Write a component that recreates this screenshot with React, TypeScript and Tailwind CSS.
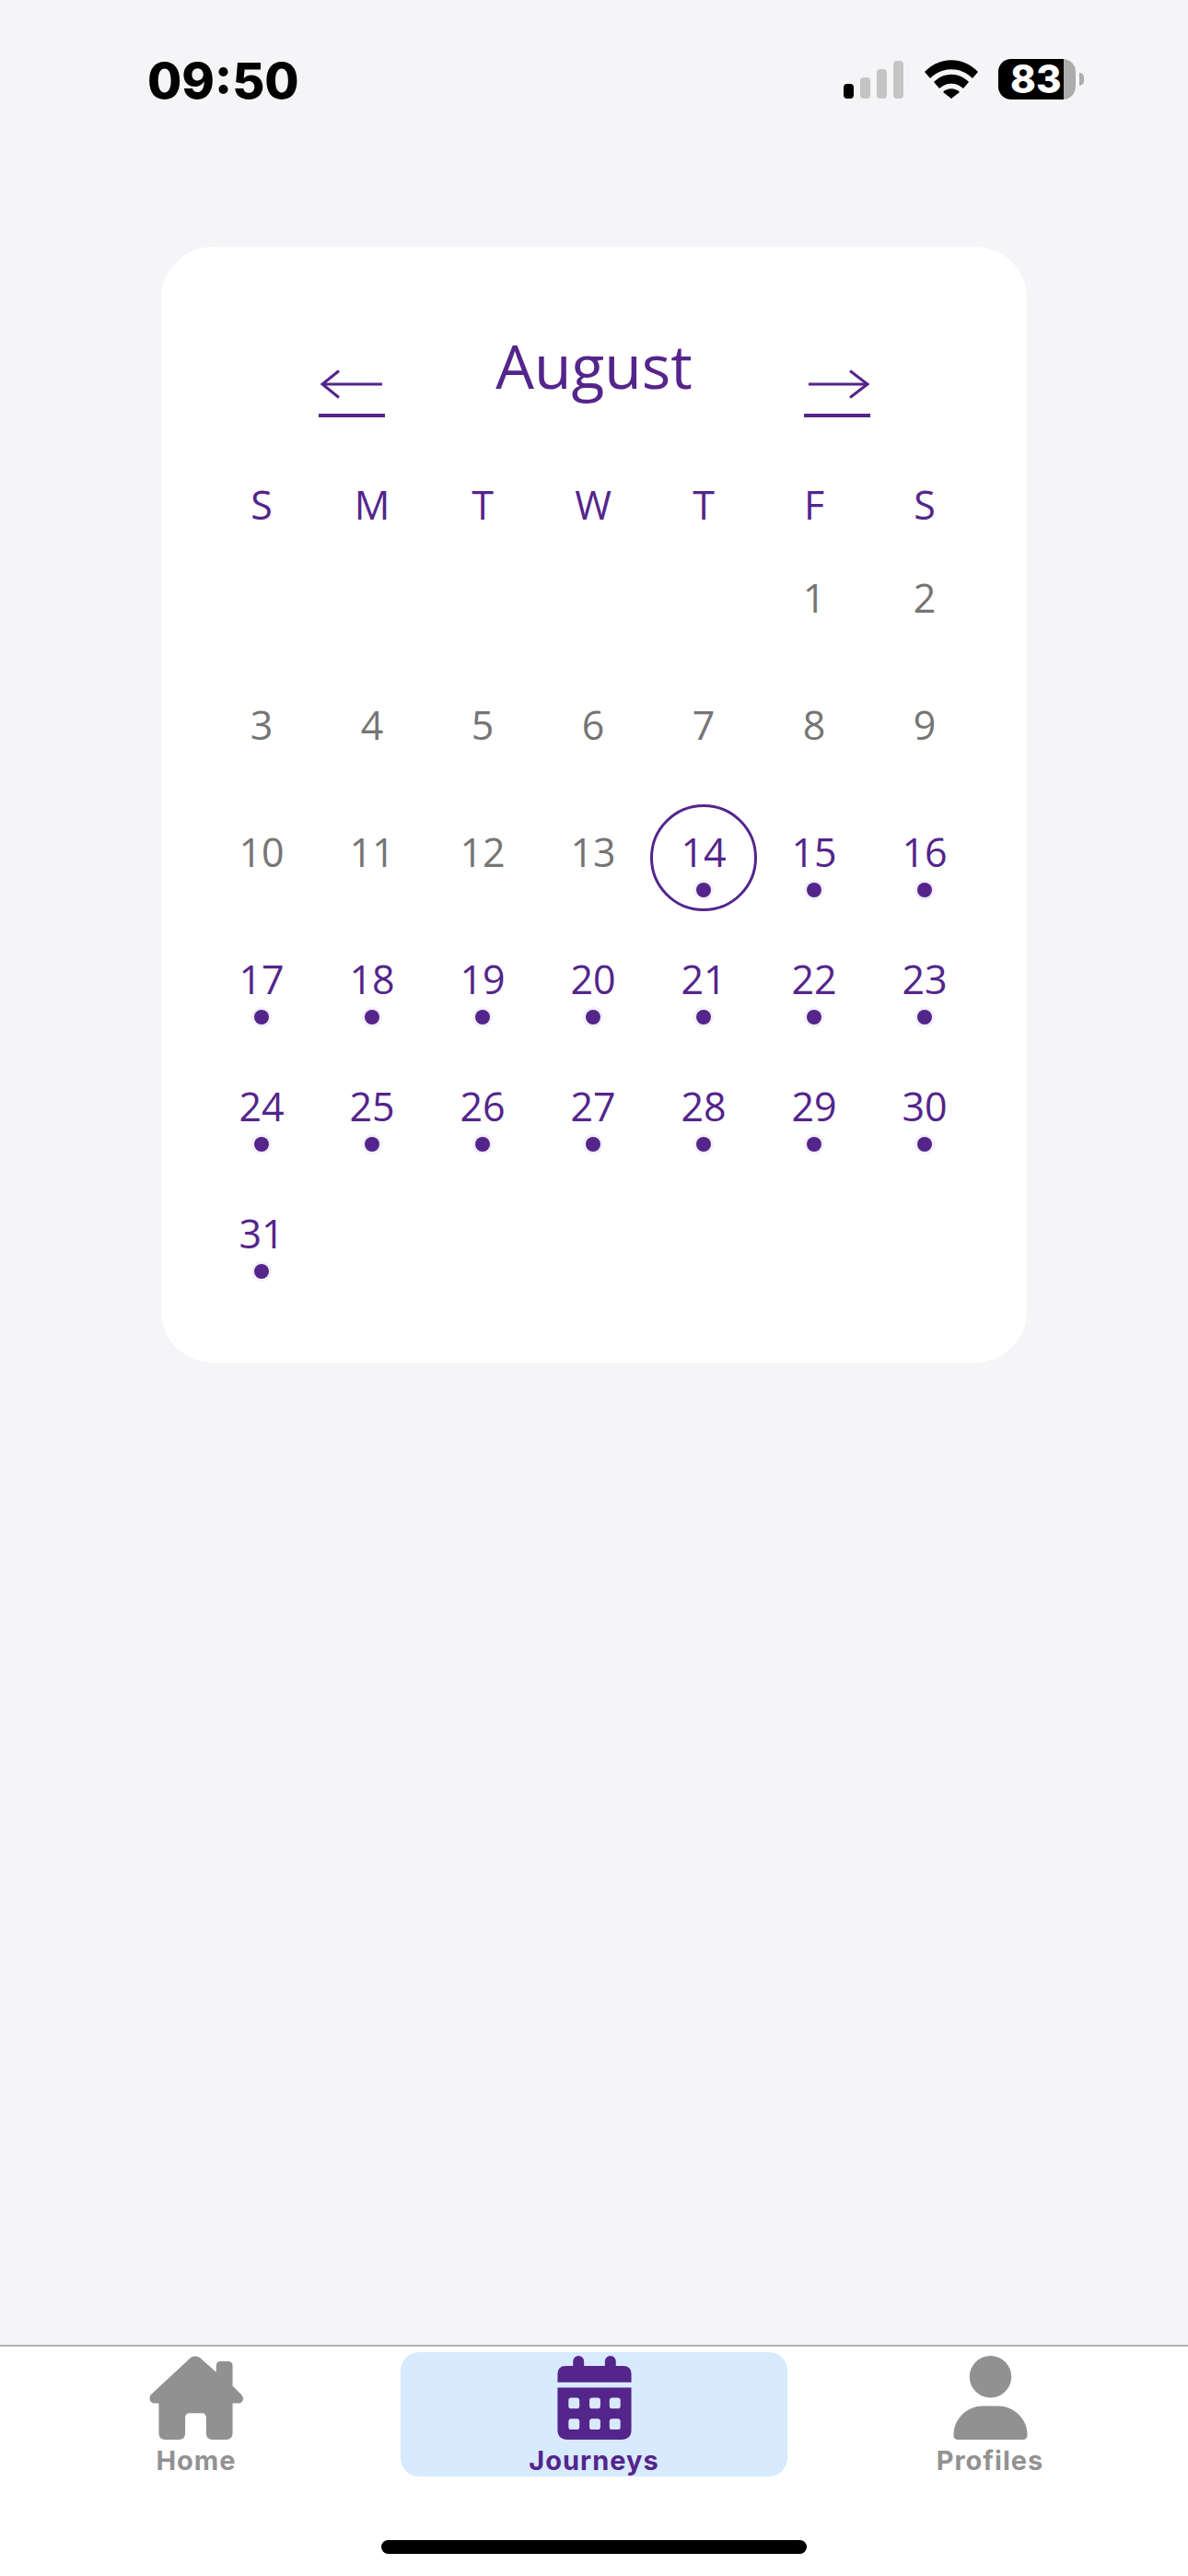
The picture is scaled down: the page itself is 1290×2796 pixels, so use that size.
import React from 'react';

const PURPLE = '#54258b';

const weekdays = ['S', 'M', 'T', 'W', 'T', 'F', 'S'];
const blanks = [0, 1, 2, 3, 4];
const days = Array.from({ length: 31 }, (_, i) => i + 1);

function StatusBar() {
  return (
    <div className="flex items-center justify-between h-[44px] mt-[64px] pl-[160px] pr-[113px]">
      <span className="pt-[3px] font-['Inter',sans-serif] font-extrabold text-[54px] leading-[44px] text-black">09:50</span>
      <div className="flex items-end">
        {/* signal */}
        <div className="flex items-end gap-[7px] mb-[1px]">
          <div className="w-[11px] h-[16px] rounded-[4px] bg-black" />
          <div className="w-[11px] h-[23px] rounded-[4px] bg-[#c4c4c4]" />
          <div className="w-[11px] h-[32px] rounded-[4px] bg-[#c4c4c4]" />
          <div className="w-[11px] h-[41px] rounded-[4px] bg-[#c4c4c4]" />
        </div>
        {/* wifi */}
        <svg width="58" height="42" viewBox="0 0 58 42" className="ml-[23px] mb-[1px]">
          <path d="M0 13C16-4 42-4 58 13L52 20C39 7 19 7 6 20Z" fill="#000" />
          <path d="M10 24C21 13 37 13 48 24L42 31C34 24 24 24 16 31Z" fill="#000" />
          <path d="M20 35C25 30 33 30 38 35L29 42Z" fill="#000" />
        </svg>
        {/* battery */}
        <div className="flex items-center ml-[22px]">
          <div className="flex items-center w-[84px] h-[44px] rounded-[14px] pl-[13px] bg-[linear-gradient(90deg,#000_0,#000_71px,#acacac_71px,#acacac_100%)]">
            <span className="font-['Inter',sans-serif] font-extrabold text-[42px] leading-none text-white">83</span>
          </div>
          <div className="w-[5px] h-[14px] ml-[4px] rounded-r-full bg-[#acacac]" />
        </div>
      </div>
    </div>
  );
}

function Arrow({ dir }: { dir: 'left' | 'right' }) {
  return (
    <div className="w-[72px] h-[54px] border-b-4 border-[#54258b] flex items-start justify-center">
      <svg width="72" height="36" viewBox="0 0 72 36" fill="none" stroke={PURPLE} strokeWidth="3">
        {dir === 'left' ? (
          <>
            <path d="M4 18H69" />
            <path d="M22 3.5L4 18L22 32.5" />
          </>
        ) : (
          <>
            <path d="M5 18H69" />
            <path d="M50 3.5L69 18L50 32.5" />
          </>
        )}
      </svg>
    </div>
  );
}

function Day({ n }: { n: number }) {
  const active = n >= 14;
  const today = n === 14;
  return (
    <div className="h-[138px] flex flex-col items-center pt-[12px]">
      <div
        className={`w-[116px] h-[116px] rounded-full border-[3px] pt-[19px] flex flex-col items-center ${
          today ? 'border-[#54258b]' : 'border-transparent'
        }`}
      >
        <span className={`text-[43px] leading-[60px] ${active ? 'text-[#54258b]' : 'text-[#757575]'}`}>{n}</span>
        {active && <div className="w-[16px] h-[16px] mt-[3px] rounded-full bg-[#54258b] shadow-[0_0_0_3px_#f4f0f9]" />}
      </div>
    </div>
  );
}

function HomeIcon() {
  return (
    <svg width="104" height="92" viewBox="0 0 104 92" fill="#919191">
      <path d="M46 2Q51-1 56 2L74 18V11Q74 6 79 6H87Q92 6 92 11V33L102 43Q106 49 100 52H92V85Q92 92 85 92H70Q63 92 63 85V68Q63 63 58 63H45Q40 63 40 68V85Q40 92 33 92H18Q11 92 11 85V52H5Q-1 50 2 43Z" />
    </svg>
  );
}

function CalendarIcon() {
  return (
    <svg width="81" height="92" viewBox="0 0 81 92" fill={PURPLE}>
      <rect x="17" y="0" width="12" height="20" rx="6" />
      <rect x="52" y="0" width="12" height="20" rx="6" />
      <path d="M0 29V20Q0 11 9 11H72Q81 11 81 20V29Z" />
      <path d="M0 35H81V81Q81 92 70 92H11Q0 92 0 81Z" />
      {[12, 35, 57].map((x) =>
        [46, 69].map((y) => <rect key={`${x}-${y}`} x={x} y={y} width="12" height="12" rx="3" fill="#d8eafe" />)
      )}
    </svg>
  );
}

function ProfileIcon() {
  return (
    <svg width="81" height="92" viewBox="0 0 81 92" fill="#919191">
      <circle cx="40.5" cy="23" r="23" />
      <path d="M0 87C0 68 16 55 32 55H49C65 55 81 68 81 87Q81 92 76 92H5Q0 92 0 87Z" />
    </svg>
  );
}

function TabBar() {
  return (
    <div className="bg-white border-t-[2px] border-[#b0b0b0] pt-[6px] pb-[24px] font-['Inter',sans-serif]">
      <div className="grid grid-cols-3">
        <div className="h-[135px] flex flex-col items-center pt-[4px] pr-[4px]">
          <HomeIcon />
          <span className="mt-[6px] text-[29px] leading-[34px] font-bold tracking-[1px] text-[#929292]">Home</span>
        </div>
        <div className="h-[135px] mx-[5px] flex flex-col items-center pt-[4px] bg-[#d8eafe] rounded-[20px]">
          <CalendarIcon />
          <span className="mt-[6px] text-[29px] leading-[34px] font-bold tracking-[1px] text-[#54258b]">Journeys</span>
        </div>
        <div className="h-[135px] flex flex-col items-center pt-[4px]">
          <ProfileIcon />
          <span className="mt-[6px] text-[29px] leading-[34px] font-bold tracking-[1px] text-[#929292]">Profiles</span>
        </div>
      </div>
      <div className="w-[462px] h-[15px] mx-auto mt-[69px] rounded-full bg-black" />
    </div>
  );
}

export default function App() {
  return (
    <div className="w-[1290px] h-[2796px] bg-[#f5f5f7] flex flex-col font-['Open_Sans',sans-serif]">
      <StatusBar />

      <div className="w-[940px] h-[1211px] mx-auto mt-[160px] pl-[49px] pr-[51px] pt-[83px] bg-white rounded-[56px]">
        <div className="flex justify-center items-end pl-[2px]">
          <Arrow dir="left" />
          <div className="w-[455px] h-[102px] text-center text-[66px] leading-[90px] text-[#54258b]">August</div>
          <Arrow dir="right" />
        </div>

        <div className="grid grid-cols-7 mt-[65px] mb-[7px]">
          {weekdays.map((d, i) => (
            <div key={i} className="text-center text-[43px] leading-[60px] text-[#54258b]">
              {d}
            </div>
          ))}
        </div>

        <div className="grid grid-cols-7">
          {blanks.map((b) => (
            <div key={b} />
          ))}
          {days.map((n) => (
            <Day key={n} n={n} />
          ))}
        </div>
      </div>

      <div className="mt-auto">
        <TabBar />
      </div>
    </div>
  );
}
